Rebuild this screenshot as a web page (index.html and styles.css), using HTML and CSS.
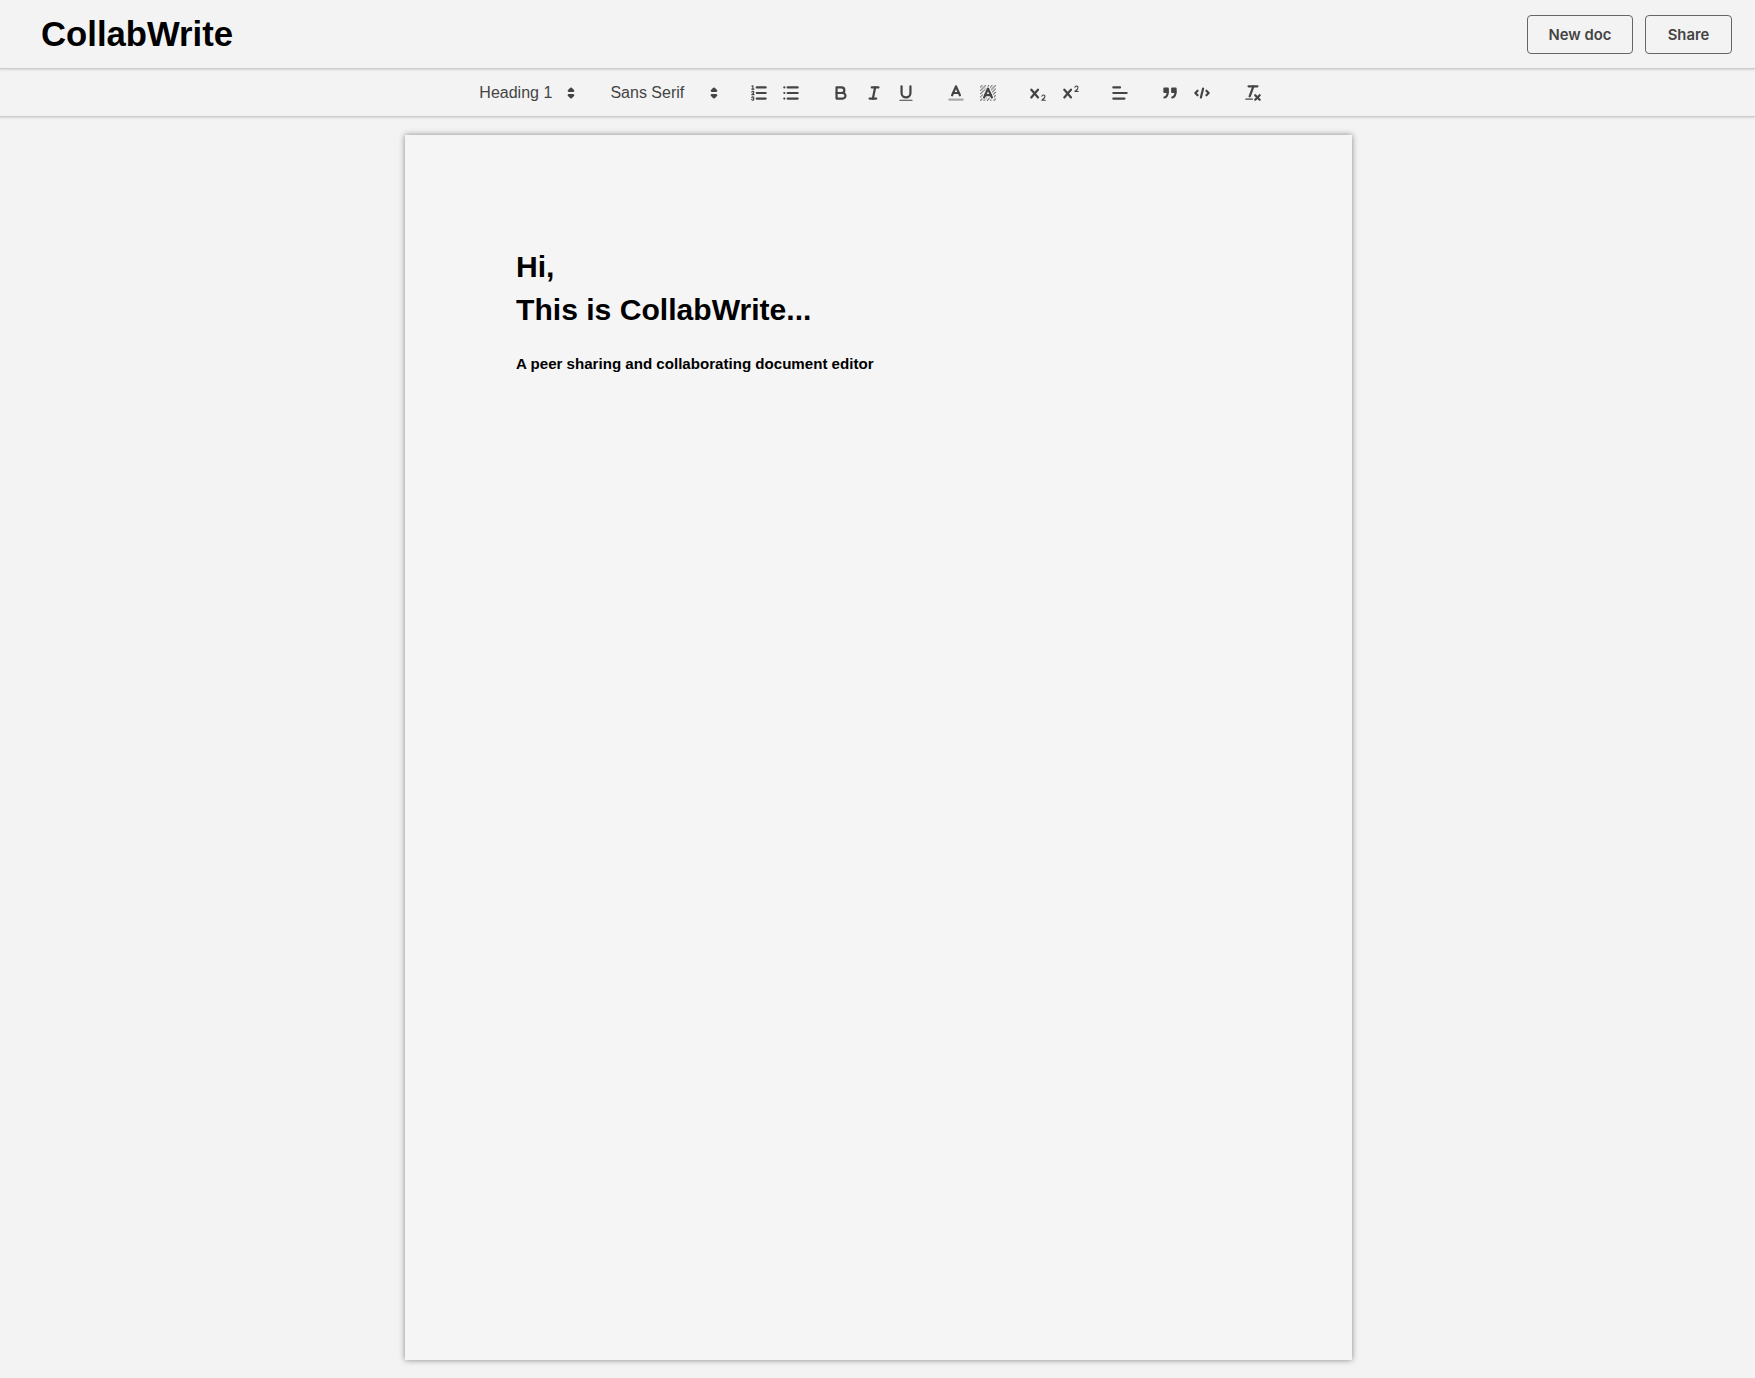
FILE: index.html
```html
<!DOCTYPE html>
<html lang="en">
<head>
<meta charset="utf-8">
<title>CollabWrite</title>
<link rel="stylesheet" href="styles.css">
</head>
<body>
<header class="topbar">
  <h1 class="logo">CollabWrite</h1>
  <div class="actions">
    <button class="btn btn-new" type="button">New doc</button>
    <button class="btn btn-share" type="button">Share</button>
  </div>
</header>
<div class="toolbar">
  <span class="group group-header">
    <span class="picker picker-header"><span>Heading 1</span>
      <svg class="icon" viewBox="0 0 18 18"><polygon class="st" points="7 11 9 13 11 11 7 11"/><polygon class="st" points="7 7 9 5 11 7 7 7"/></svg></span>
  </span>
  <span class="group group-font">
    <span class="picker picker-font"><span>Sans Serif</span>
      <svg class="icon" viewBox="0 0 18 18"><polygon class="st" points="7 11 9 13 11 11 7 11"/><polygon class="st" points="7 7 9 5 11 7 7 7"/></svg></span>
  </span>
  <span class="group">
    <span class="tool"><svg class="icon" viewBox="0 0 18 18"><line class="st" x1="7" x2="15" y1="4" y2="4"/><line class="st" x1="7" x2="15" y1="9" y2="9"/><line class="st" x1="7" x2="15" y1="14" y2="14"/><line class="st thin" x1="2.5" x2="4.5" y1="5.5" y2="5.5"/><path class="fi" d="M3.5,6A0.5,0.5,0,0,1,3,5.5V3.085l-0.276.138A0.5,0.5,0,0,1,2.053,3c-0.124-.247-0.023-0.324.224-0.447l1-.5A0.5,0.5,0,0,1,4,2.5v3A0.5,0.5,0,0,1,3.5,6Z"/><path class="st thin" d="M4.5,10.5h-2c0-.234,1.85-1.076,1.85-2.234A0.959,0.959,0,0,0,2.5,8.156"/><path class="st thin" d="M2.5,14.846a0.959,0.959,0,0,0,1.85-.109A0.7,0.7,0,0,0,3.75,14a0.688,0.688,0,0,0,.6-0.736,0.959,0.959,0,0,0-1.85-.109"/></svg></span>
    <span class="tool"><svg class="icon" viewBox="0 0 18 18"><line class="st" x1="6" x2="15" y1="4" y2="4"/><line class="st" x1="6" x2="15" y1="9" y2="9"/><line class="st" x1="6" x2="15" y1="14" y2="14"/><line class="st" x1="3" x2="3" y1="4" y2="4"/><line class="st" x1="3" x2="3" y1="9" y2="9"/><line class="st" x1="3" x2="3" y1="14" y2="14"/></svg></span>
  </span>
  <span class="group">
    <span class="tool"><svg class="icon" viewBox="0 0 18 18"><path class="st" d="M5,4H9.5A2.5,2.5,0,0,1,12,6.5v0A2.5,2.5,0,0,1,9.5,9H5A0,0,0,0,1,5,9V4A0,0,0,0,1,5,4Z"/><path class="st" d="M5,9h5.5A2.5,2.5,0,0,1,13,11.5v0A2.5,2.5,0,0,1,10.5,14H5a0,0,0,0,1,0,0V9A0,0,0,0,1,5,9Z"/></svg></span>
    <span class="tool"><svg class="icon" viewBox="0 0 18 18"><line class="st" x1="7" x2="13" y1="4" y2="4"/><line class="st" x1="5" x2="11" y1="14" y2="14"/><line class="st" x1="8" x2="10" y1="14" y2="4"/></svg></span>
    <span class="tool"><svg class="icon" viewBox="0 0 18 18"><path class="st" d="M5,3V9a4.012,4.012,0,0,0,4,4H9a4.012,4.012,0,0,0,4-4V3"/><rect class="fi" height="1" rx="0.5" ry="0.5" width="12" x="3" y="15"/></svg></span>
  </span>
  <span class="group">
    <span class="tool"><svg class="icon" viewBox="0 0 18 18"><line class="st faint" x1="3" x2="15" y1="15" y2="15"/><polyline class="st" points="5.5 11 9 3 12.5 11"/><line class="st" x1="11.63" x2="6.38" y1="9" y2="9"/></svg></span>
    <span class="tool"><svg class="icon" viewBox="0 0 18 18"><g class="fi"><polygon points="6 6.868 6 6 5 6 5 7 5.942 7 6 6.868"/><rect height="1" width="1" x="4" y="4"/><polygon points="6.817 5 6 5 6 6 6.38 6 6.817 5"/><rect height="1" width="1" x="2" y="6"/><rect height="1" width="1" x="3" y="5"/><rect height="1" width="1" x="4" y="7"/><polygon points="4 11.439 4 11 3 11 3 12 3.755 12 4 11.439"/><rect height="1" width="1" x="2" y="12"/><rect height="1" width="1" x="2" y="9"/><rect height="1" width="1" x="2" y="15"/><polygon points="4.63 10 4 10 4 11 4.192 11 4.63 10"/><rect height="1" width="1" x="3" y="8"/><path d="M10.832,4.2L11,4.582V4H10.708A1.948,1.948,0,0,1,10.832,4.2Z"/><path d="M7,4.582L7.168,4.2A1.929,1.929,0,0,1,7.292,4H7V4.582Z"/><path d="M8,13H7.683l-0.351.8a1.933,1.933,0,0,1-.124.2H8V13Z"/><rect height="1" width="1" x="12" y="2"/><rect height="1" width="1" x="11" y="3"/><path d="M9,3H8V3.282A1.985,1.985,0,0,1,9,3Z"/><rect height="1" width="1" x="2" y="3"/><rect height="1" width="1" x="6" y="2"/><rect height="1" width="1" x="3" y="2"/><rect height="1" width="1" x="5" y="3"/><rect height="1" width="1" x="9" y="2"/><rect height="1" width="1" x="15" y="14"/><polygon points="13.447 10.174 13.469 10.225 13.472 10.232 13.808 11 14 11 14 10 13.37 10 13.447 10.174"/><rect height="1" width="1" x="13" y="7"/><rect height="1" width="1" x="15" y="5"/><rect height="1" width="1" x="14" y="6"/><rect height="1" width="1" x="15" y="8"/><rect height="1" width="1" x="14" y="9"/><path d="M3.775,14H3v1H4V14.314A1.97,1.97,0,0,1,3.775,14Z"/><rect height="1" width="1" x="14" y="3"/><polygon points="12 6.868 12 6 11.62 6 12 6.868"/><rect height="1" width="1" x="15" y="2"/><rect height="1" width="1" x="12" y="5"/><rect height="1" width="1" x="13" y="4"/><polygon points="12.933 9 13 9 13 8 12.495 8 12.933 9"/><rect height="1" width="1" x="9" y="14"/><rect height="1" width="1" x="8" y="15"/><path d="M6,14.926V15H7V14.316A1.993,1.993,0,0,1,6,14.926Z"/><rect height="1" width="1" x="5" y="15"/><path d="M10.668,13.8L10.317,13H10v1h0.792A1.947,1.947,0,0,1,10.668,13.8Z"/><rect height="1" width="1" x="11" y="15"/><path d="M14.332,12.2a1.99,1.99,0,0,1,.166.8H15V12H14.245Z"/><rect height="1" width="1" x="14" y="15"/><rect height="1" width="1" x="15" y="11"/></g><polyline class="st" points="5.5 13 9 5 12.5 13"/><line class="st" x1="11.63" x2="6.38" y1="11" y2="11"/></svg></span>
  </span>
  <span class="group">
    <span class="tool"><svg class="icon" viewBox="0 0 18 18"><path class="fi" d="M15.5,15H13.861a3.858,3.858,0,0,0,1.914-2.975,1.8,1.8,0,0,0-1.6-1.751A1.921,1.921,0,0,0,12.021,11.7a0.50013,0.50013,0,1,0,.957.291h0a0.914,0.914,0,0,1,1.053-.725,0.81,0.81,0,0,1,.744.762c0,1.076-1.16971,1.86982-1.93971,2.43082A1.45639,1.45639,0,0,0,12,15.5a0.5,0.5,0,0,0,.5.5h3A0.5,0.5,0,0,0,15.5,15Z"/><path class="fi" d="M9.65,5.241a1,1,0,0,0-1.409.108L6,7.964,3.759,5.349A1,1,0,0,0,2.192,6.59178Q2.21541,6.6213,2.241,6.649L4.684,9.5,2.241,12.35A1,1,0,0,0,3.71,13.70722q0.02557-.02768.049-0.05722L6,11.036,8.241,13.65a1,1,0,1,0,1.567-1.24277Q9.78459,12.3777,9.759,12.35L7.316,9.5,9.759,6.651A1,1,0,0,0,9.65,5.241Z"/></svg></span>
    <span class="tool"><svg class="icon" viewBox="0 0 18 18"><path class="fi" d="M15.5,7H13.861a4.015,4.015,0,0,0,1.914-2.975,1.8,1.8,0,0,0-1.6-1.751A1.922,1.922,0,0,0,12.021,3.7a0.5,0.5,0,1,0,.957.291,0.917,0.917,0,0,1,1.053-.725,0.81,0.81,0,0,1,.744.762c0,1.077-1.164,1.925-1.934,2.486A1.423,1.423,0,0,0,12,7.5a0.5,0.5,0,0,0,.5.5h3A0.5,0.5,0,0,0,15.5,7Z"/><path class="fi" d="M9.651,5.241a1,1,0,0,0-1.41.108L6,7.964,3.759,5.349a1,1,0,1,0-1.519,1.3L4.683,9.5,2.241,12.35a1,1,0,1,0,1.519,1.3L6,11.036l2.241,2.615a1,1,0,0,0,1.519-1.3L7.317,9.5,9.759,6.651A1,1,0,0,0,9.651,5.241Z"/></svg></span>
  </span>
  <span class="group">
    <span class="tool"><svg class="icon" viewBox="0 0 18 18"><line class="st" x1="3" x2="15" y1="9" y2="9"/><line class="st" x1="3" x2="13" y1="14" y2="14"/><line class="st" x1="3" x2="9" y1="4" y2="4"/></svg></span>
  </span>
  <span class="group group-code">
    <span class="tool"><svg class="icon" viewBox="0 0 18 18"><rect class="fi st" height="3" width="3" x="4" y="5"/><rect class="fi st" height="3" width="3" x="11" y="5"/><path class="st" d="M7,8c0,4.031-3,5-3,5"/><path class="st" d="M14,8c0,4.031-3,5-3,5"/></svg></span>
    <span class="tool"><svg class="icon" viewBox="0 0 18 18"><polyline class="st" points="5 7 3 9 5 11"/><polyline class="st" points="13 7 15 9 13 11"/><line class="st" x1="10" x2="8" y1="5" y2="13"/></svg></span>
  </span>
  <span class="group group-last">
    <span class="tool"><svg class="icon" viewBox="0 0 18 18"><line class="st" x1="5" x2="13" y1="3" y2="3"/><line class="st" x1="6" x2="9.35" y1="12" y2="3"/><line class="st" x1="11" x2="15" y1="11" y2="15"/><line class="st" x1="15" x2="11" y1="11" y2="15"/><rect class="fi" height="1" rx="0.5" ry="0.5" width="7" x="2" y="14"/></svg></span>
  </span>
</div>
<main class="workspace">
  <article class="sheet">
    <h2 class="doc-title">Hi,<br>This is CollabWrite...</h2>
    <p class="doc-sub">A peer sharing and collaborating document editor</p>
  </article>
</main>
</body>
</html>
```
FILE: styles.css
```css
* { box-sizing: border-box; }
html, body { margin: 0; height: 100%; }
body {
  background: #f3f3f3;
  font-family: "Liberation Sans", Arial, sans-serif;
  color: #000;
  overflow: hidden;
}
.topbar {
  height: 69px;
  display: flex;
  align-items: center;
  justify-content: space-between;
  padding: 1px 23px 0 41px;
  border-bottom: 1px solid #ccc;
  box-shadow: 0 1px 2px rgba(0, 0, 0, 0.12);
}
.logo {
  margin: 0;
  font-size: 34.7px;
  font-weight: 700;
  line-height: 1;
}
.actions { display: flex; gap: 12px; }
.btn {
  height: 39px;
  padding: 0;
  background: #f3f3f3;
  border: 1px solid #666;
  border-radius: 4px;
  font-family: Inter, "Liberation Sans", sans-serif;
  font-size: 14.8px;
  font-weight: 600;
  color: #444;
}
.btn-new { width: 106px; }
.btn-share { width: 87px; }
.toolbar {
  height: 48px;
  display: flex;
  align-items: center;
  justify-content: center;
  padding-left: 1.7px;
  border-bottom: 1px solid #ccc;
  box-shadow: 0 1px 2px rgba(0, 0, 0, 0.12);
}
.group { display: flex; margin-right: 16.8px; }
.group-header { margin-right: 20.4px; }
.group-font { margin-right: 18.5px; }
.group-code { margin-right: 18.1px; }
.group-last { margin-right: 17px; }
.picker {
  display: flex;
  align-items: center;
  justify-content: space-between;
  height: 27px;
  padding-left: 9px;
  font-size: 16px;
  color: #444;
}
.picker-header { width: 110.7px; }
.picker-font { width: 122.4px; }
.tool {
  display: flex;
  align-items: center;
  justify-content: center;
  width: 32.7px;
  height: 27px;
}
.icon { width: 20px; height: 20px; display: block; flex: none; }
.st {
  fill: none;
  stroke: #444;
  stroke-width: 2;
  stroke-linecap: round;
  stroke-linejoin: round;
}
.thin { stroke-width: 1; }
.faint { stroke: #aaa; }
.fi { fill: #444; }
.workspace { padding: 18px 0 0 1px; display: flex; justify-content: center; }
.sheet {
  width: 947px;
  height: 1225px;
  background: #f5f5f5;
  box-shadow: 0 0 6px rgba(0, 0, 0, 0.45);
  padding: 110px 111.5px 0;
}
.doc-title {
  margin: 0;
  font-size: 30.1px;
  font-weight: 700;
  line-height: 43px;
}
.doc-sub {
  margin: 22px 0 0;
  font-size: 15.1px;
  font-weight: 700;
  line-height: 22px;
}
```
